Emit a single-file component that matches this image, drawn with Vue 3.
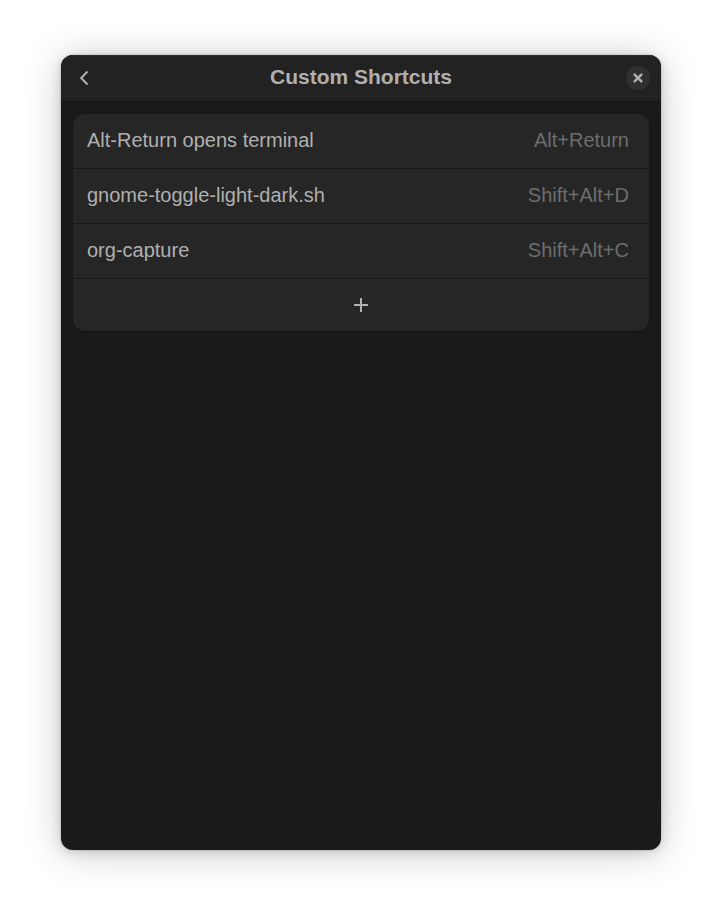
<script setup>
import { ref } from "vue";

const shortcuts = ref([
  { name: "Alt-Return opens terminal", keys: "Alt+Return" },
  { name: "gnome-toggle-light-dark.sh", keys: "Shift+Alt+D" },
  { name: "org-capture", keys: "Shift+Alt+C" },
]);
</script>

<template>
  <div class="desktop">
    <main class="window">
      <header class="header">
        <button class="back" type="button" aria-label="Back">
          <svg width="16" height="16" viewBox="0 0 16 16">
            <path d="M11.5 1.5 L5.2 8 L11.5 14.5" />
          </svg>
        </button>
        <h1 class="title">Custom Shortcuts</h1>
        <button class="close" type="button" aria-label="Close">
          <svg width="16" height="16" viewBox="0 0 16 16">
            <path d="M4.6 4.6 L11.4 11.4 M11.4 4.6 L4.6 11.4" />
          </svg>
        </button>
      </header>
      <ul class="list">
        <li v-for="shortcut in shortcuts" :key="shortcut.name">
          <button class="row" type="button">
            <span class="name">{{ shortcut.name }}</span>
            <span class="keys">{{ shortcut.keys }}</span>
          </button>
        </li>
        <li>
          <button class="add" type="button" aria-label="Add shortcut">
            <svg width="16" height="16" viewBox="0 0 16 16">
              <path d="M8 1 V15 M1 8 H15" />
            </svg>
          </button>
        </li>
      </ul>
    </main>
  </div>
</template>

<style>
body {
  margin: 0;
  background: #fff;
}
</style>

<style scoped>
.desktop {
  box-sizing: border-box;
  display: flex;
  min-height: 100vh;
  padding: 55px 61px 67px;
  font-family: "Liberation Sans", Arial, sans-serif;
  font-size: 20px;
  line-height: 24px;
  color: #b0b0b0;
}
.window {
  flex: 1;
  min-width: 0;
  overflow: hidden;
  background: #1a1a1a;
  border-radius: 12px;
  box-shadow: 0 0 2px rgba(0, 0, 0, 0.3), 0 2px 12px rgba(0, 0, 0, 0.14),
    0 3px 40px rgba(0, 0, 0, 0.2);
}
button {
  display: flex;
  align-items: center;
  justify-content: center;
  margin: 0;
  padding: 0;
  border: 0;
  background: none;
  color: inherit;
  font: inherit;
}
svg {
  display: block;
  fill: none;
  stroke: currentColor;
  stroke-width: 2;
}
.header {
  display: grid;
  grid-template-columns: 24px 1fr 24px;
  align-items: center;
  height: 44px;
  padding: 0 11px 1px;
  background: #222;
  border-top: 1px solid #2c2c2c;
  border-bottom: 1px solid #171717;
}
.title {
  margin: 0;
  padding-bottom: 2px;
  font-size: 21px;
  line-height: 24px;
  font-weight: bold;
  text-align: center;
}
.back,
.close {
  width: 24px;
  height: 24px;
}
.close {
  border-radius: 50%;
  background: #303030;
}
.close svg {
  stroke-width: 2.4;
  stroke-linecap: round;
}
.list {
  margin: 12px;
  padding: 0;
  list-style: none;
  overflow: hidden;
  border-radius: 12px;
  background: #262626;
  box-shadow: 0 1px 3px rgba(0, 0, 0, 0.2);
}
.row {
  box-sizing: border-box;
  width: 100%;
  height: 55px;
  justify-content: space-between;
  gap: 12px;
  padding: 0 20px 2px 14px;
  border-bottom: 1px solid #191919;
}
.keys {
  color: #6d6d6d;
}
.add {
  width: 100%;
  height: 52px;
}
</style>
